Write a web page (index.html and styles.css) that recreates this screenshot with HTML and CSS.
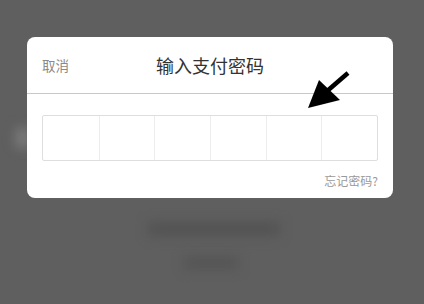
FILE: index.html
```html
<!DOCTYPE html>
<html lang="zh-CN">
<head>
<meta charset="utf-8">
<link rel="stylesheet" href="styles.css">
</head>
<body>
<div class="backdrop">
  <div class="blur blur-a"></div>
  <div class="blur blur-b"></div>
  <div class="blur blur-c"></div>
</div>
<div class="dialog">
  <div class="header">
    <span class="cancel">取消</span>
    <span class="title">输入支付密码</span>
    <span></span>
  </div>
  <div class="content">
    <div class="pin">
      <div class="cell"></div>
      <div class="cell"></div>
      <div class="cell"></div>
      <div class="cell"></div>
      <div class="cell"></div>
      <div class="cell"></div>
    </div>
    <div class="forgot">忘记密码?</div>
  </div>
</div>
<svg class="arrow" width="424" height="304" viewBox="0 0 424 304">
  <line x1="348" y1="73" x2="326" y2="92" stroke="#000" stroke-width="4.5" stroke-linecap="butt"/>
  <polygon points="308,108 319,80 340,100" fill="#000"/>
</svg>
</body>
</html>
```
FILE: styles.css
```css
html, body {
  margin: 0;
  padding: 0;
}
body {
  width: 424px;
  height: 304px;
  background: #5f5f5f;
  font-family: "Noto Sans CJK SC", "Noto Sans", sans-serif;
  overflow: hidden;
  position: relative;
  display: flex;
  flex-direction: column;
}
.backdrop {
  position: absolute;
  inset: 0;
}
.blur {
  position: absolute;
  filter: blur(6px);
}
.blur-a {
  left: 148px;
  top: 222px;
  width: 132px;
  height: 14px;
  background: #535353;
}
.blur-b {
  left: 184px;
  top: 257px;
  width: 54px;
  height: 12px;
  background: #545454;
}
.blur-c {
  left: 16px;
  top: 128px;
  width: 14px;
  height: 20px;
  background: #7c7c7c;
}
.dialog {
  position: relative;
  margin: 37px 0 0 27px;
  width: 366px;
  height: 161px;
  background: #fff;
  border-radius: 8px;
  display: flex;
  flex-direction: column;
}
.header {
  height: 56px;
  border-bottom: 1px solid #c8c8c8;
  display: grid;
  grid-template-columns: 1fr auto 1fr;
  align-items: center;
  padding: 0 15px;
}
.cancel {
  font-size: 13.5px;
  color: #8a8a8a;
  margin-top: -1px;
}
.title {
  font-size: 18px;
  color: #333;
}
.content {
  padding: 21px 15px 0;
  display: flex;
  flex-direction: column;
}
.pin {
  height: 46px;
  border: 1px solid #dedede;
  border-radius: 2px;
  display: grid;
  grid-template-columns: repeat(6, 1fr);
  box-sizing: border-box;
}
.cell + .cell {
  border-left: 1px solid #ececec;
}
.forgot {
  align-self: flex-end;
  margin-top: 11px;
  font-size: 12px;
  color: #999;
  line-height: 18px;
}
.arrow {
  position: absolute;
  left: 0;
  top: 0;
}
```
